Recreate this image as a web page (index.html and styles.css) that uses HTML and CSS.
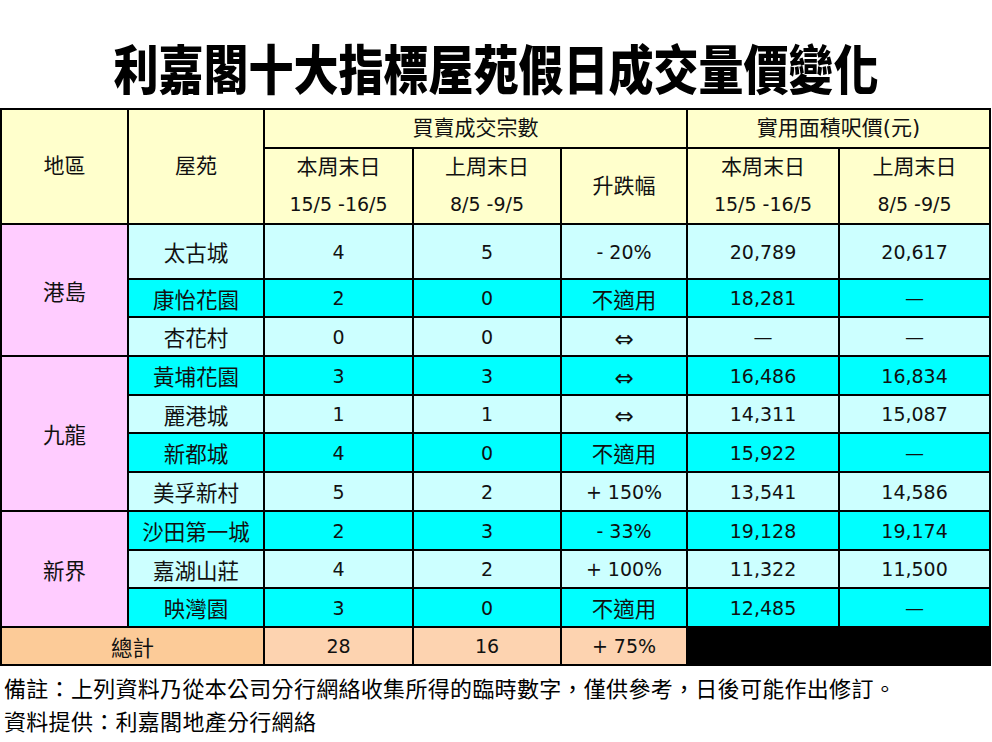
FILE: index.html
```html
<!DOCTYPE html>
<html lang="zh-Hant">
<head>
<meta charset="utf-8">
<title>利嘉閣十大指標屋苑假日成交量價變化</title>
<link rel="stylesheet" href="styles.css">
</head>
<body>
<div class="title"><span class="title-text">利嘉閣十大指標屋苑假日成交量價變化</span></div>
<table class="data">
  <colgroup>
    <col class="c1"><col class="c2"><col class="c3"><col class="c4"><col class="c5"><col class="c6"><col class="c7">
  </colgroup>
  <tr class="h1">
    <td rowspan="2" class="hd">地區</td>
    <td rowspan="2" class="hd">屋苑</td>
    <td colspan="3" class="hd">買賣成交宗數</td>
    <td colspan="2" class="hd">實用面積呎價(元)</td>
  </tr>
  <tr class="h2">
    <td class="hd">本周末日<br><span class="num">15/5 -16/5</span></td>
    <td class="hd">上周末日<br><span class="num">8/5 -9/5</span></td>
    <td class="hd">升跌幅</td>
    <td class="hd">本周末日<br><span class="num">15/5 -16/5</span></td>
    <td class="hd">上周末日<br><span class="num">8/5 -9/5</span></td>
  </tr>
  <tr class="lt r55">
    <td rowspan="3" class="region">港島</td>
    <td class="nm">太古城</td><td>4</td><td>5</td><td>- 20%</td><td>20,789</td><td>20,617</td>
  </tr>
  <tr class="cy r38">
    <td class="nm">康怡花園</td><td>2</td><td>0</td><td class="nm">不適用</td><td>18,281</td><td>—</td>
  </tr>
  <tr class="lt r39">
    <td class="nm">杏花村</td><td>0</td><td>0</td><td class="eq">⇔</td><td>—</td><td>—</td>
  </tr>
  <tr class="cy r39">
    <td rowspan="4" class="region">九龍</td>
    <td class="nm">黃埔花園</td><td>3</td><td>3</td><td class="eq">⇔</td><td>16,486</td><td>16,834</td>
  </tr>
  <tr class="lt r38">
    <td class="nm">麗港城</td><td>1</td><td>1</td><td class="eq">⇔</td><td>14,311</td><td>15,087</td>
  </tr>
  <tr class="cy r39">
    <td class="nm">新都城</td><td>4</td><td>0</td><td class="nm">不適用</td><td>15,922</td><td>—</td>
  </tr>
  <tr class="lt r39">
    <td class="nm">美孚新村</td><td>5</td><td>2</td><td>+ 150%</td><td>13,541</td><td>14,586</td>
  </tr>
  <tr class="cy r39">
    <td rowspan="3" class="region">新界</td>
    <td class="nm">沙田第一城</td><td>2</td><td>3</td><td>- 33%</td><td>19,128</td><td>19,174</td>
  </tr>
  <tr class="lt r38">
    <td class="nm">嘉湖山莊</td><td>4</td><td>2</td><td>+ 100%</td><td>11,322</td><td>11,500</td>
  </tr>
  <tr class="cy r39">
    <td class="nm">映灣園</td><td>3</td><td>0</td><td class="nm">不適用</td><td>12,485</td><td>—</td>
  </tr>
  <tr class="total r38">
    <td colspan="2" class="total-label">總計</td>
    <td>28</td><td>16</td><td>+ 75%</td>
    <td colspan="2" class="blank"></td>
  </tr>
</table>
<div class="notes">
  <p class="note">備註：上列資料乃從本公司分行網絡收集所得的臨時數字，僅供參考，日後可能作出修訂。</p>
  <p class="note">資料提供：利嘉閣地產分行網絡</p>
</div>
</body>
</html>
```

FILE: styles.css
```css
html, body {
  margin: 0;
  padding: 0;
  background: #ffffff;
}

body {
  width: 992px;
  font-family: "Noto Sans CJK TC", sans-serif;
  color: #000;
}

.title {
  height: 108px;
  box-sizing: border-box;
  padding-top: 38px;
  text-align: center;
}

.title-text {
  display: inline-block;
  font-size: 45px;
  line-height: 60px;
  font-weight: 900;
  letter-spacing: 0;
  transform: scaleY(1.18);
}

.data {
  border-collapse: collapse;
  table-layout: fixed;
  width: 989px;
  font-family: "DejaVu Sans", "Noto Sans CJK TC", sans-serif;
  font-size: 19px;
}

.c1 { width: 127px; }
.c2 { width: 136px; }
.c3 { width: 149px; }
.c4 { width: 148px; }
.c5 { width: 126px; }
.c6 { width: 152px; }
.c7 { width: 151px; }

.data td {
  border: 2.5px solid #000;
  text-align: center;
  vertical-align: middle;
  padding: 0;
  white-space: nowrap;
  color: #111;
  font-size: 19px;
}

.data td.hd {
  background: #ffffcc;
  font-size: 21px;
  line-height: 37px;
}

.hd .num {
  font-size: 19px;
}

.h1 { height: 35px; }
.h2 { height: 76px; }
.r55 { height: 55px; }
.r38 { height: 38px; }
.r39 { height: 39px; }

.lt td { background: #ccffff; }
.cy td { background: #00ffff; }

.data td.nm {
  font-size: 21.5px;
}

.data td.eq {
  font-size: 23px;
  padding-top: 4px;
}

.data td.region {
  background: #ffccff;
  font-size: 21.5px;
}

.total td { background: #fdd3b0; }
.data td.total-label { background: #fccb98; font-size: 21.5px; }
.data td.blank { background: #000; }

.notes {
  padding: 5px 0 0 4px;
}

.note {
  margin: 0;
  font-size: 22px;
  line-height: 33px;
  letter-spacing: 0.3px;
}
```
